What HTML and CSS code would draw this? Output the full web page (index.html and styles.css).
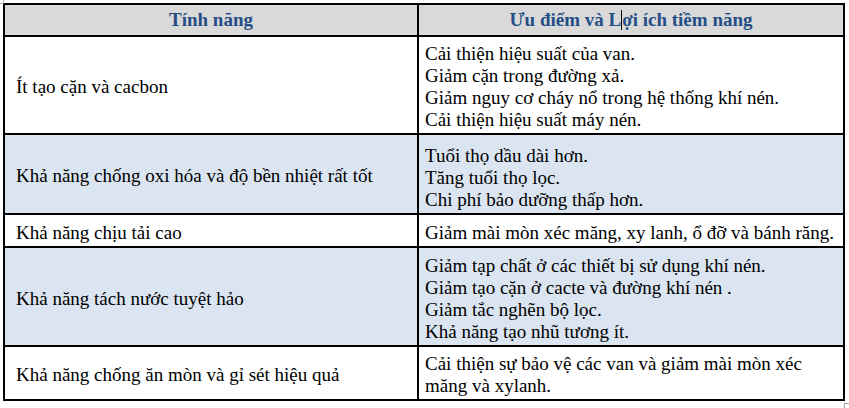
FILE: index.html
```html
<!DOCTYPE html>
<html lang="vi">
<head>
<meta charset="utf-8">
<title>Tính năng</title>
<link rel="stylesheet" href="styles.css">
</head>
<body>
<span class="mark mark-tl"></span>
<table class="grid">
  <colgroup><col class="c1"><col class="c2"></colgroup>
  <thead>
    <tr class="rh">
      <th>Tính năng</th>
      <th>Ưu điểm và L<span class="caret"></span>ợi ích tiềm năng</th>
    </tr>
  </thead>
  <tbody>
    <tr class="r1">
      <td class="feat">Ít tạo cặn và cacbon</td>
      <td class="ben">Cải thiện hiệu suất của van.<br>Giảm cặn trong đường xả.<br>Giảm nguy cơ cháy nổ trong hệ thống khí nén.<br>Cải thiện hiệu suất máy nén.</td>
    </tr>
    <tr class="r2 alt">
      <td class="feat">Khả năng chống oxi hóa và độ bền nhiệt rất tốt</td>
      <td class="ben ben-low">Tuổi thọ dầu dài hơn.<br>Tăng tuổi thọ lọc.<br>Chi phí bảo dưỡng thấp hơn.</td>
    </tr>
    <tr class="r3">
      <td class="feat">Khả năng chịu tải cao</td>
      <td class="ben">Giảm mài mòn xéc măng, xy lanh, ổ đỡ và bánh răng.</td>
    </tr>
    <tr class="r4 alt">
      <td class="feat">Khả năng tách nước tuyệt hảo</td>
      <td class="ben">Giảm tạp chất ở các thiết bị sử dụng khí nén.<br>Giảm tạo cặn ở cacte và đường khí nén .<br>Giảm tắc nghẽn bộ lọc.<br>Khả năng tạo nhũ tương ít.</td>
    </tr>
    <tr class="r5">
      <td class="feat">Khả năng chống ăn mòn và gỉ sét hiệu quả</td>
      <td class="ben">Cải thiện sự bảo vệ các van và giảm mài mòn xéc măng và xylanh.</td>
    </tr>
  </tbody>
</table>
<span class="mark mark-br"></span>
</body>
</html>
```
FILE: styles.css
```css
html, body {
  margin: 0;
  padding: 0;
  background: #ffffff;
}
body {
  padding: 3px 0 0 3px;
  position: relative;
  width: 849px;
  height: 408px;
  box-sizing: border-box;
  overflow: hidden;
  font-family: "Liberation Serif", "Times New Roman", serif;
  color: #000000;
}
.grid {
  border-collapse: collapse;
  table-layout: fixed;
  width: 840px;
  font-size: 19px;
  line-height: 22px;
}
.c1 { width: 414px; }
.c2 { width: 426px; }
.grid th, .grid td {
  border: 2px solid #000000;
  vertical-align: middle;
  text-align: left;
  padding: 4px 4px 0 6px;
}
.grid th {
  background: #d9d9d9;
  color: #254e87;
  font-weight: bold;
  text-align: center;
  padding: 0 4px;
}
.grid td.feat { padding-left: 11px; }
.grid td.ben { padding-left: 6px; }
.grid td.ben-low { padding-top: 8px; }
.alt td { background: #dbe5f1; }
.rh { height: 32px; }
.r1 { height: 98px; }
.r2 { height: 80px; }
.r3 { height: 33px; }
.r4 { height: 99px; }
.r5 { height: 54px; }
.caret {
  display: inline-block;
  width: 1px;
  height: 20px;
  background: #000000;
  vertical-align: -4px;
}
.mark {
  position: absolute;
  width: 3px;
  height: 3px;
  border: 0 solid #a6a6a6;
}
.mark-tl {
  left: 0;
  top: 0;
  border-right-width: 1px;
  border-bottom-width: 1px;
}
.mark-br {
  left: 844px;
  top: 403px;
  width: 5px;
  height: 5px;
  border-left-width: 1px;
  border-top-width: 1px;
}
```
